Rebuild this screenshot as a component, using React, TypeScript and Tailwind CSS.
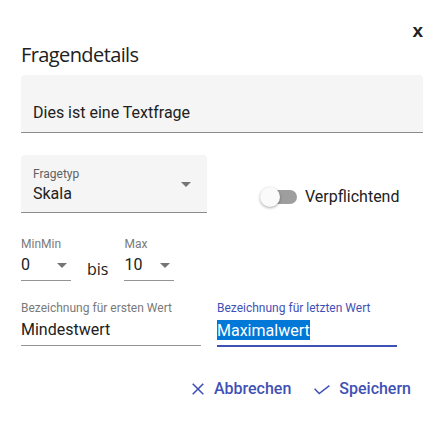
import React from 'react';

const roboto = { fontFamily: 'Roboto, "Liberation Sans", sans-serif' };

function Caret() {
  return (
    <svg width="10" height="5" viewBox="0 0 10 5" className="shrink-0">
      <path d="M0 0h10L5 5z" fill="#757575" />
    </svg>
  );
}

function SmallSelect({ label, value }: { label: string; value: string }) {
  return (
    <div className="w-[50px]">
      <div className="text-[12px] leading-[16px] text-[#7a7a7a]">{label}</div>
      <div className="mt-[4px] flex items-center justify-between border-b border-[#949494] pb-[6px] pr-[4px]">
        <span className="text-[16px] leading-[18px] text-[#212121]">{value}</span>
        <span className="mt-[1px]">
          <Caret />
        </span>
      </div>
    </div>
  );
}

export default function App() {
  return (
    <div className="h-[428px] w-[446px] overflow-hidden bg-white pl-[21px] pr-[23px]" style={roboto}>
      <div className="flex justify-end pt-[21px]">
        <span
          className="h-[19px] text-[19px] font-bold leading-none text-[#212121]"
          style={{ fontFamily: '"Liberation Sans", Arial, sans-serif' }}
        >
          x
        </span>
      </div>

      <h2
        className="mt-[1px] text-[20px] leading-[28px] tracking-[-0.6px] text-[#212121]"
        style={{ fontFamily: '"Open Sans", "Noto Sans", sans-serif' }}
      >
        Fragendetails
      </h2>

      <div className="mt-[6px] h-[58px] rounded-t-[4px] border-b border-[#8c8c8c] bg-[#f5f5f5] px-[12px] pt-[26px]">
        <div className="text-[16px] leading-[24px] text-[#212121]">Dies ist eine Textfrage</div>
      </div>

      <div className="mt-[22px] flex items-start">
        <div className="flex h-[58px] w-[186px] justify-between rounded-t-[4px] border-b border-[#8c8c8c] bg-[#f5f5f5] pl-[12px] pr-[16px] pt-[11px]">
          <div>
            <div className="text-[12px] leading-[16px] text-[#616161]">Fragetyp</div>
            <div className="text-[16px] leading-[23px] text-[#212121]">Skala</div>
          </div>
          <div className="mt-[16px]">
            <Caret />
          </div>
        </div>

        <div className="ml-[53px] mt-[30px] flex items-center">
          <div className="relative h-[20px] w-[37px]">
            <div className="absolute left-[3px] top-[3px] h-[14px] w-[34px] rounded-full bg-[#9e9e9e]" />
            <div className="absolute left-0 top-0 h-[20px] w-[20px] rounded-full bg-[#fafafa] shadow-[0_1px_3px_rgba(0,0,0,0.35)]" />
          </div>
          <span className="ml-[8px] text-[16px] leading-[24px] text-[#212121]">Verpflichtend</span>
        </div>
      </div>

      <div className="mt-[23px] flex items-end">
        <SmallSelect label="MinMin" value="0" />
        <span
          className="mx-[16px] text-[16px] leading-[24px] text-[#212121]"
          style={{ fontFamily: '"Open Sans", "Noto Sans", sans-serif' }}
        >
          bis
        </span>
        <SmallSelect label="Max" value="10" />
      </div>

      <div className="mt-[19px] flex gap-[16px]">
        <div className="w-[180px]">
          <div className="text-[12px] leading-[16px] text-[#7a7a7a]">Bezeichnung für ersten Wert</div>
          <div className="mt-[5px] border-b border-[#949494] pb-[5.5px] text-[16px] leading-[18px] text-[#212121]">
            Mindestwert
          </div>
        </div>
        <div className="w-[180px]">
          <div className="text-[12px] leading-[16px] text-[#3f51b5]">Bezeichnung für letzten Wert</div>
          <div className="mt-[5px] border-b-2 border-[#3f51b5] pb-[5.5px] text-[16px] leading-[18px]">
            <span className="bg-[#0078d7] py-[0.5px] text-white">Maximalwert</span>
          </div>
        </div>
      </div>

      <div className="mt-[30px] flex justify-end gap-[23px] pr-[12px] text-[16px] font-medium text-[#3f51b5]">
        <button className="flex items-center gap-[10px]">
          <svg width="12" height="12" viewBox="0 0 12 12">
            <path d="M0.7 0.7L11.3 11.3M11.3 0.7L0.7 11.3" stroke="#3f51b5" strokeWidth="1.6" fill="none" />
          </svg>
          <span className="leading-[24px]">Abbrechen</span>
        </button>
        <button className="flex items-center gap-[9px]">
          <svg width="16" height="10" viewBox="0 0 16 10" className="mt-[2px]">
            <path d="M0.6 3.8L5.2 8.6L15.4 0.6" stroke="#3f51b5" strokeWidth="1.5" fill="none" />
          </svg>
          <span className="leading-[24px]">Speichern</span>
        </button>
      </div>
    </div>
  );
}
